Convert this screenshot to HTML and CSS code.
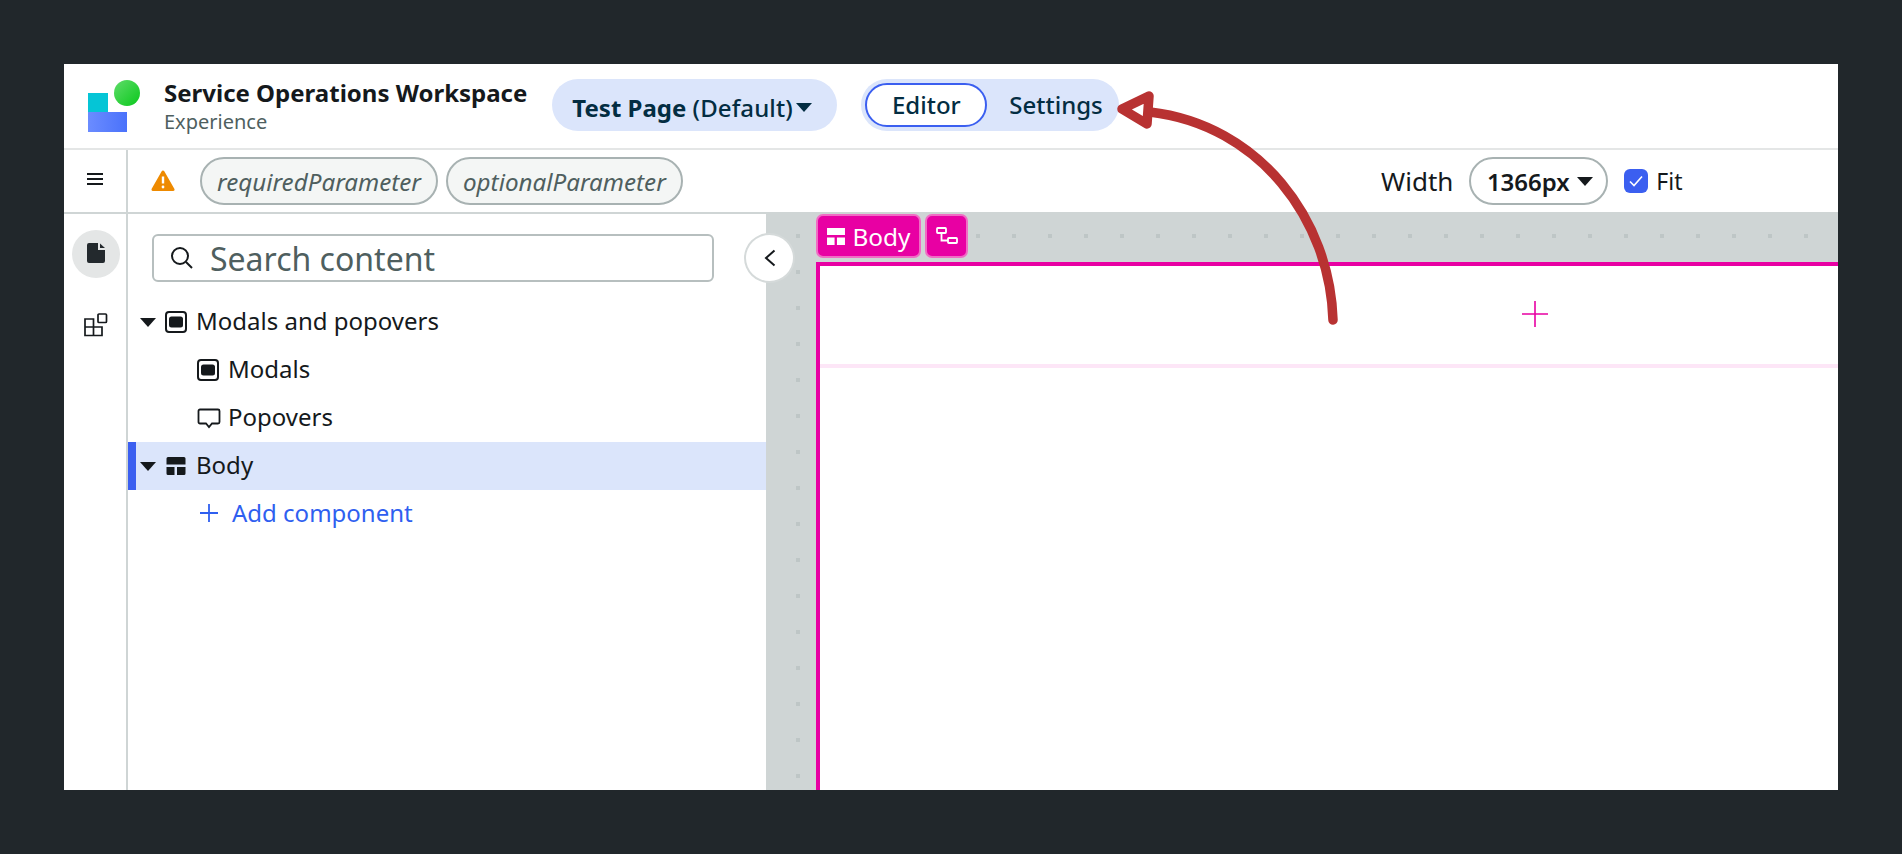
FILE: index.html
```html
<!DOCTYPE html>
<html lang="en">
<head>
<meta charset="utf-8">
<title>Service Operations Workspace</title>
<link rel="stylesheet" href="styles.css">
</head>
<body>
<div class="app">
  <header class="header">
    <svg class="logo" width="54" height="54" viewBox="0 0 54 54">
      <defs>
        <linearGradient id="lg-blue" x1="0" y1="0" x2="1" y2="0"><stop offset="0" stop-color="#6b8cff"/><stop offset="1" stop-color="#4a72fb"/></linearGradient>
        <linearGradient id="lg-green" x1="0" y1="0" x2="1" y2="1"><stop offset="0" stop-color="#5fdc6a"/><stop offset="1" stop-color="#0ac81c"/></linearGradient>
      </defs>
      <rect x="0" y="14" width="20" height="20" fill="#05c5d6"/>
      <rect x="0" y="33" width="39" height="20" fill="url(#lg-blue)"/>
      <circle cx="39" cy="14" r="13" fill="url(#lg-green)"/>
    </svg>
    <div class="title-block">
      <div class="title">Service Operations Workspace</div>
      <div class="subtitle">Experience</div>
    </div>
    <div class="page-pill"><b>Test Page</b>&nbsp;<span class="pill-default">(Default)</span><span class="caret caret-navy"></span></div>
    <div class="segment">
      <span class="seg-on">Editor</span>
      <span class="seg-off">Settings</span>
    </div>
  </header>

  <div class="toolbar">
    <div class="menu-cell">
      <svg width="16" height="12" viewBox="0 0 16 12"><path d="M0 1h16M0 6h16M0 11h16" stroke="#15191c" stroke-width="2"/></svg>
    </div>
    <svg class="warn" width="24" height="22" viewBox="0 0 24 22">
      <path d="M12 2 L22 19.5 H2 Z" fill="#ee8a00" stroke="#ee8a00" stroke-width="3" stroke-linejoin="round"/>
      <path d="M12 6.5v7" stroke="#fff" stroke-width="2.4"/><circle cx="12" cy="17" r="1.4" fill="#fff"/>
    </svg>
    <span class="chip">requiredParameter</span>
    <span class="chip">optionalParameter</span>
    <div class="width-group">
      <span class="width-label">Width</span>
      <span class="width-select">1366px<span class="caret caret-dark"></span></span>
      <span class="checkbox">
        <svg width="16" height="14" viewBox="0 0 16 14"><path d="M2 7.5 6 11.5 14 2.5" fill="none" stroke="#fff" stroke-width="1.6"/></svg>
      </span>
      <span class="fit">Fit</span>
    </div>
  </div>

  <div class="main">
    <nav class="rail">
      <span class="rail-active">
        <svg class="doc-icon" width="18" height="20" viewBox="0 0 18 20"><path d="M2 0H11V7H18V18a2 2 0 0 1-2 2H2a2 2 0 0 1-2-2V2a2 2 0 0 1 2-2Z" fill="#23292d"/><path d="M13 0.500 18 5H13Z" fill="#23292d"/></svg>
      </span>
      <span class="rail-item">
        <svg width="24" height="24" viewBox="0 0 24 24" fill="none" stroke="#15191c" stroke-width="1.7"><path d="M1 6H9.500V14H18V22.500H1ZM9.500 14V22.500M1 14H9.500"/><rect x="14" y="1" width="8.500" height="8.500" rx="1"/></svg>
      </span>
    </nav>

    <aside class="panel">
      <div class="search">
        <svg width="24" height="24" viewBox="0 0 24 24" fill="none" stroke="#15191c" stroke-width="2"><circle cx="10" cy="10" r="8"/><path d="M16 16 22 22"/></svg>
        <span>Search content</span>
      </div>
      <ul class="tree">
        <li class="row">
          <span class="caret caret-dark"></span>
          <svg class="row-icon" width="22" height="22" viewBox="0 0 22 22"><rect x="1" y="1" width="20" height="20" rx="3" fill="none" stroke="#15191c" stroke-width="2"/><rect x="4" y="5.500" width="14" height="11" rx="2.500" fill="#15191c"/></svg>
          <span>Modals and popovers</span>
        </li>
        <li class="row row-child">
          <svg class="row-icon" width="22" height="22" viewBox="0 0 22 22"><rect x="1" y="1" width="20" height="20" rx="3" fill="none" stroke="#15191c" stroke-width="2"/><rect x="4" y="5.500" width="14" height="11" rx="2.500" fill="#15191c"/></svg>
          <span>Modals</span>
        </li>
        <li class="row row-child">
          <svg class="row-icon row-icon-wide" width="24" height="22" viewBox="0 0 24 22"><path d="M3 2.500H21a1.500 1.500 0 0 1 1.500 1.500V15a1.500 1.500 0 0 1-1.500 1.500H15L12 20 9 16.500H3A1.500 1.500 0 0 1 1.500 15V4A1.500 1.500 0 0 1 3 2.500Z" fill="none" stroke="#15191c" stroke-width="1.8"/></svg>
          <span>Popovers</span>
        </li>
        <li class="row row-selected">
          <span class="caret caret-dark"></span>
          <svg class="row-icon" width="22" height="22" viewBox="0 0 22 22" fill="#15191c"><path d="M3 2H19a1.500 1.500 0 0 1 1.500 1.500V9.500H1.500V3.500A1.500 1.500 0 0 1 3 2ZM1.500 12H9.500V20H3A1.500 1.500 0 0 1 1.500 18.500ZM12 12H20.500V18.500A1.500 1.500 0 0 1 19 20H12Z"/></svg>
          <span>Body</span>
        </li>
        <li class="row row-add">
          <svg width="18" height="18" viewBox="0 0 18 18"><path d="M9 0V18M0 9H18" stroke="#2f5ff0" stroke-width="1.800"/></svg>
          <span>Add component</span>
        </li>
      </ul>
    </aside>

    <section class="canvas">
      <div class="tags">
        <span class="tag">
          <svg width="18" height="17" viewBox="1.500 2 19 18" fill="#fff"><path d="M1.500 2H20.500V9.500H1.500ZM1.500 12H9.500V20H1.500ZM12 12H20.500V20H12Z"/></svg>
          Body
        </span>
        <span class="tag tag-icon">
          <svg width="22" height="18" viewBox="0 0 22 18" fill="none" stroke="#fff" stroke-width="1.800"><rect x="1" y="1" width="9" height="5" rx="0.800"/><rect x="12" y="11" width="9" height="5" rx="0.800"/><path d="M5.500 6V13.500H12"/></svg>
        </span>
      </div>
      <div class="stage">
        <div class="slot">
          <svg width="26" height="26" viewBox="0 0 26 26"><path d="M13 0V26M0 13H26" stroke="#e800a3" stroke-width="1.600"/></svg>
        </div>
      </div>
    </section>

    <button class="collapse" type="button" aria-label="Collapse">
      <svg width="12" height="18" viewBox="0 0 12 18"><path d="M10.500 1.500 2 9 10.500 16.500" fill="none" stroke="#15191c" stroke-width="2"/></svg>
    </button>
  </div>

  <svg class="arrow" width="1774" height="726" viewBox="64 64 1774 726" fill="none" stroke="#b83232" stroke-linecap="round" stroke-linejoin="round">
    <path d="M1333 320C1330 220 1260 125 1150 112" stroke-width="9.500"/>
    <path d="M1122 109 1149 96 1147 124Z" stroke-width="9.500"/>
  </svg>
</div>
</body>
</html>
```
FILE: styles.css
```css
* { box-sizing: border-box; }
html, body { margin: 0; height: 100%; overflow: hidden; }
body { background: #21272b; padding: 64px; font-family: "Noto Sans", "Open Sans", sans-serif; color: #15191c; }
.app { position: relative; width: 1774px; height: 726px; background: #fff; overflow: hidden; display: flex; flex-direction: column; }

.header { height: 86px; flex: none; display: flex; align-items: center; padding-left: 24px; border-bottom: 2px solid #e4e6e6; }
.logo { flex: none; }
.title-block { margin-left: 22px; margin-right: 25px; margin-top: 1px; flex: none; }
.title { font-size: 24px; font-weight: 700; line-height: 30px; color: #15191c; white-space: nowrap; }
.subtitle { font-size: 20px; line-height: 26px; margin-top: 1px; color: #4f5f5f; }
.page-pill { width: 285px; height: 52px; margin-top: -2px; padding-top: 4px; border-radius: 26px; background: #dbe5fb; display: flex; align-items: center; padding-left: 20px; font-size: 24px; color: #032d42; white-space: nowrap; }
.pill-default { font-weight: 500; letter-spacing: 0.1px; }
.segment { margin-left: 24px; width: 258px; height: 52px; margin-top: -2px; border-radius: 26px; background: #dbe5fb; display: flex; align-items: center; padding-left: 4px; font-size: 24px; font-weight: 500; color: #032d42; }
.seg-on { width: 122px; height: 44px; padding-bottom: 2px; border: 2px solid #3b5ff0; border-radius: 22px; background: #fff; display: flex; align-items: center; justify-content: center; }
.seg-off { margin-left: 22px; margin-bottom: 2px; }

.caret { display: inline-block; width: 0; height: 0; border-left: 8px solid transparent; border-right: 8px solid transparent; border-top: 9px solid #15191c; flex: none; }
.caret-navy { border-top-color: #032d42; margin-left: 3px; }

.toolbar { height: 62px; flex: none; display: flex; align-items: center; }
.menu-cell { width: 64px; height: 100%; border-right: 2px solid #cfd5d5; display: flex; align-items: center; justify-content: center; flex: none; }
.menu-cell svg { margin-bottom: 4px; }
.warn { margin-left: 23px; margin-right: 25px; flex: none; }
.chip { height: 48px; border: 2px solid #a8b2b2; border-radius: 24px; background: #f4f6f5; padding: 0 15px; margin-right: 8px; display: flex; align-items: center; font-size: 24.2px; font-style: italic; color: #4f5f5f; }
.width-group { display: flex; align-items: center; position: absolute; left: 1317px; top: 93px; height: 48px; }
.width-label { font-size: 26px; }
.width-select { margin-left: 16px; width: 139px; height: 48px; padding-left: 2px; border: 2px solid #a8b2b2; border-radius: 24px; display: flex; align-items: center; justify-content: center; gap: 7px; font-size: 24px; font-weight: 600; }
.checkbox { margin-left: 16px; width: 24px; height: 24px; border-radius: 6px; background: #3b5ff0; display: flex; align-items: center; justify-content: center; }
.fit { margin-left: 8px; font-size: 23px; }

.main { flex: 1; min-height: 0; display: flex; position: relative; }
.rail { width: 64px; flex: none; border-right: 2px solid #cfd5d5; border-top: 2px solid #cfd5d5; display: flex; flex-direction: column; align-items: center; padding-top: 16px; gap: 35px; }
.rail-active { width: 48px; height: 48px; margin-left: 2px; border-radius: 50%; background: #e4e6e6; display: flex; align-items: center; justify-content: center; }
.doc-icon { margin-bottom: 2px; }
.rail-item { height: 24px; display: flex; margin-left: 2px; }

.panel { width: 638px; flex: none; border-top: 2px solid #cfd5d5; }
.search { margin: 20px 0 0 24px; width: 562px; height: 48px; padding-bottom: 0; border: 2px solid #b7bfbf; border-radius: 6px; display: flex; align-items: center; padding-left: 16px; gap: 16px; font-size: 32px; color: #4f5f5f; }
.tree { list-style: none; margin: 16px 0 0; padding: 0; }
.row { height: 48px; display: flex; align-items: center; padding-left: 12px; font-size: 24px; }
.row > span:last-child { margin-bottom: 4px; }
.row .caret { margin-right: 9px; }
.row .row-icon { margin-right: 9px; flex: none; }
.row .row-icon-wide { margin-right: 7px; }
.row-child { padding-left: 69px; }
.row-selected { background: #dbe5fb; border-left: 8px solid #3b5ff0; padding-left: 4px; }
.row-add { padding-left: 72px; gap: 14px; color: #2f5ff0; }
.row-add svg { margin-bottom: 2px; }

.canvas { flex: 1; min-width: 0; display: flex; flex-direction: column; padding: 2px 0 0 50px; background: #cfd5d5 conic-gradient(at 4px 4px, transparent 75%, #bec6c6 0) 30px 22px / 36px 36px; }
.tags { height: 44px; flex: none; display: flex; gap: 4px; margin-bottom: 4px; }
.tag { height: 44px; border: 2px solid #f06cc4; border-radius: 7px; background: #e800a3; color: #fff; display: flex; align-items: center; gap: 8px; padding: 0 8.5px; font-size: 24.4px; }
.stage { flex: 1; min-height: 0; background: #fff; border-top: 4px solid #e800a3; border-left: 4px solid #e800a3; overflow: hidden; }
.slot { width: 1430px; height: 102px; border-bottom: 4px solid #fde6f7; display: flex; align-items: center; justify-content: center; }
.slot svg { margin-bottom: 2px; }

.collapse { position: absolute; left: 680px; top: 21px; width: 51px; height: 50px; padding: 0; border: 2px solid #d5dada; border-radius: 50%; background: #fff; display: flex; align-items: center; justify-content: center; }

.arrow { position: absolute; left: 0; top: 0; pointer-events: none; }
```
